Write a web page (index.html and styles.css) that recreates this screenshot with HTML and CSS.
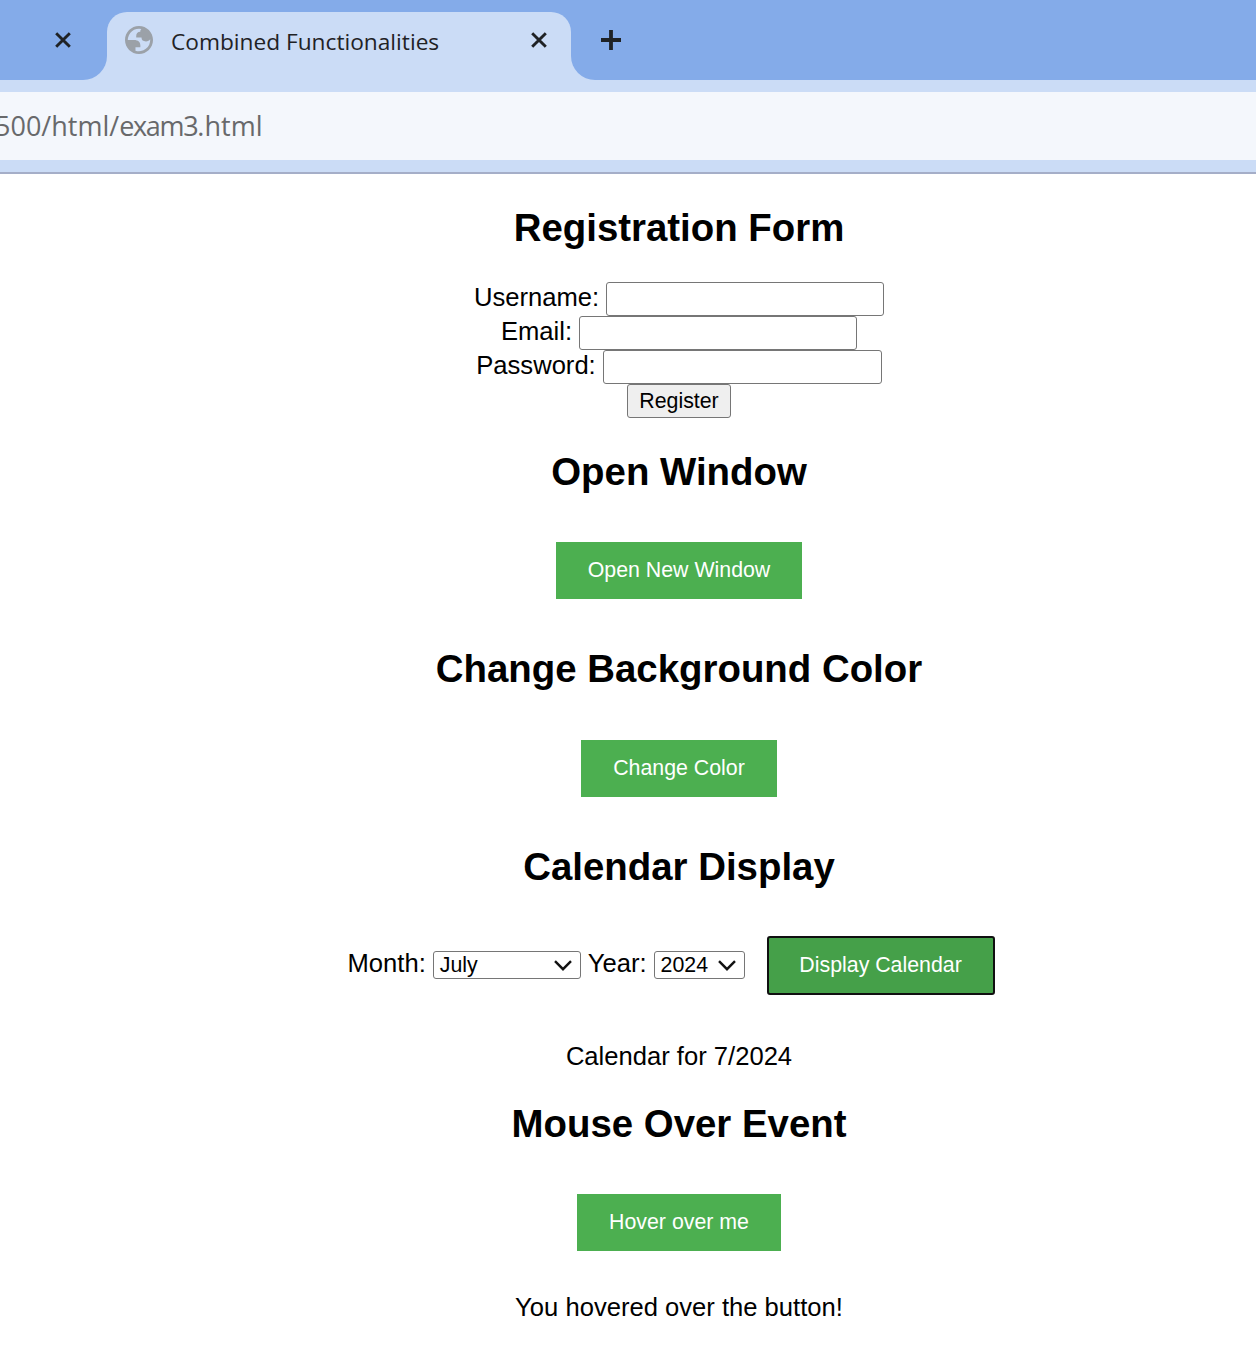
FILE: index.html
```html
<!DOCTYPE html>
<html lang="en">
<head>
<meta charset="utf-8">
<title>Combined Functionalities</title>
<link rel="stylesheet" href="styles.css">
</head>
<body>
<header class="browser">
  <div class="tabs">
    <div class="tab-prev">
      <svg class="close" width="16" height="16" viewBox="0 0 16 16"><path d="M1.2 1.2 14.8 14.8M14.8 1.2 1.2 14.8"/></svg>
    </div>
    <div class="tab">
      <svg class="globe" width="28" height="28" viewBox="2 2 20 20"><path fill-rule="evenodd" d="M12 2C6.480 2 2 6.480 2 12s4.480 10 10 10 10-4.480 10-10S17.520 2 12 2zM4 12h4.400c3.407.022 4.922 1.730 4.543 5.127H9.488v2.470a8.004 8.004 0 0 0 10.498-8.083C19.327 12.504 18.332 13 17 13c-2.137 0-3.206-.916-3.206-2.750h-3.748c-.274-2.728.683-4.092 2.870-4.092 0-.975.327-1.597.811-1.970A8.004 8.004 0 0 0 4 12z"/></svg>
      <span class="tab-title">Combined Functionalities</span>
      <svg class="close" width="16" height="16" viewBox="0 0 16 16"><path d="M1.2 1.2 14.8 14.8M14.8 1.2 1.2 14.8"/></svg>
    </div>
    <div class="tab-rest">
      <svg class="plus" width="20" height="20" viewBox="0 0 20 20"><path d="M10 0V20M0 10H20"/></svg>
    </div>
  </div>
  <div class="address"><span class="url">500/html/<span class="file">exam3</span>.html</span></div>
</header>
<main class="page">
  <h2 class="title">Registration Form</h2>
  <form class="form">
    <div class="row"><label class="label" for="user">Username:</label><input class="field" id="user" type="text"></div>
    <div class="row"><label class="label" for="mail">Email:</label><input class="field" id="mail" type="email"></div>
    <div class="row"><label class="label" for="pass">Password:</label><input class="field wide" id="pass" type="password"></div>
    <button class="register" type="button">Register</button>
  </form>
  <h2 class="title">Open Window</h2>
  <button class="button b-open" type="button">Open New Window</button>
  <h2 class="title">Change Background Color</h2>
  <button class="button b-color" type="button">Change Color</button>
  <h2 class="title">Calendar Display</h2>
  <div class="calendar">
    <span class="label">Month:</span>
    <div class="select month"><span>July</span><svg class="chevron" width="18" height="11" viewBox="0 0 18 11"><path d="M1 1.200 9 9.200 17 1.200"/></svg></div>
    <span class="label">Year:</span>
    <div class="select year"><span>2024</span><svg class="chevron" width="18" height="11" viewBox="0 0 18 11"><path d="M1 1.200 9 9.200 17 1.200"/></svg></div>
    <button class="button b-cal" type="button">Display Calendar</button>
  </div>
  <p class="note n-cal">Calendar for 7/2024</p>
  <h2 class="title">Mouse Over Event</h2>
  <button class="button b-hover" type="button">Hover over me</button>
  <p class="note">You hovered over the button!</p>
</main>
</body>
</html>
```
FILE: styles.css
```css
* { box-sizing: border-box; }
body { margin: 0; background: #fff; color: #000; font-family: "Liberation Sans", Arial, sans-serif; overflow: hidden; }
svg { display: block; fill: none; flex: none; }

.browser { height: 174px; background: #cbdcf6; border-bottom: 2px solid #a5aec8; font-family: "Open Sans", "Noto Sans", sans-serif; }
.tabs { display: flex; height: 80px; background: linear-gradient(#84abe9, #84abe9) no-repeat 0 0 / 100% 50px, #cbdcf6; }
.tab-prev { width: 107px; background: #84abe9; border-bottom-right-radius: 24px; padding: 32px 0 0 55px; }
.tab { display: flex; width: 464px; height: 68px; margin-top: 12px; background: #cbdcf6; border-radius: 20px 20px 0 0; padding: 14px 0 0 18px; }
.tab-rest { flex: 1; background: #84abe9; border-bottom-left-radius: 24px; padding: 30px 0 0 30px; }
.close { stroke: #1f2225; stroke-width: 2.9; }
.plus { stroke: #1f2225; stroke-width: 3.8; }
.globe { fill: #9ba1a8; }
.tab-title { width: 378px; padding-left: 18px; font-size: 22.700px; line-height: 31px; color: #1f2225; white-space: nowrap; }
.tab .close { margin-top: 6px; }
.address { height: 68px; margin-top: 12px; background: #f4f7fc; overflow: hidden; }
.url { display: block; margin-left: -5px; font-size: 27px; line-height: 68px; color: #68696b; }
.file { letter-spacing: -1.3px; }

.page { display: flex; flex-direction: column; align-items: center; padding: 32px 0 0 102px; }
.title { margin: 0; font-size: 38.400px; line-height: 44px; white-space: nowrap; }
.form { display: flex; flex-direction: column; align-items: center; margin: 32px 0; }
.row { display: flex; gap: 7px; height: 34px; }
.label { font-size: 25.600px; line-height: 30px; }
.field { width: 278px; height: 34px; border: 1px solid #767676; border-radius: 3px; background: #fff; font: 21.333px "Liberation Sans", sans-serif; }
.field.wide { width: 279px; }
.register { width: 104px; height: 34px; padding: 0; border: 1px solid #767676; border-radius: 3px; background: #efefef; color: #000; font: 21.333px "Liberation Sans", sans-serif; }
.button { height: 57px; padding: 0 0 1px; border: 0; background: #4caf50; color: #fff; font: 21.333px "Liberation Sans", sans-serif; }
.b-open { width: 246px; margin: 48px 0; }
.b-color { width: 196px; margin: 49px 0 48px; }
.b-hover { width: 204px; margin: 48px 0 41px; }
.calendar { display: flex; width: 647px; height: 57px; margin: 48px 16px 47px 0; }
.calendar .label { margin-top: 11px; white-space: nowrap; }
.select { display: flex; justify-content: space-between; align-items: center; height: 28px; margin: 14px 7px 0; padding: 0 8px 0 6px; border: 1px solid #767676; border-radius: 3px; font-size: 21.333px; }
.month { width: 148px; }
.year { width: 91px; }
.chevron { stroke: #111; stroke-width: 2.4; }
.b-cal { width: 226px; margin-left: 16px; background: #45a049; border-radius: 2px; outline: 2.5px solid #101010; outline-offset: -1px; }
.note { margin: 0; font-size: 25.600px; line-height: 30px; }
.n-cal { margin-bottom: 31px; }
```
